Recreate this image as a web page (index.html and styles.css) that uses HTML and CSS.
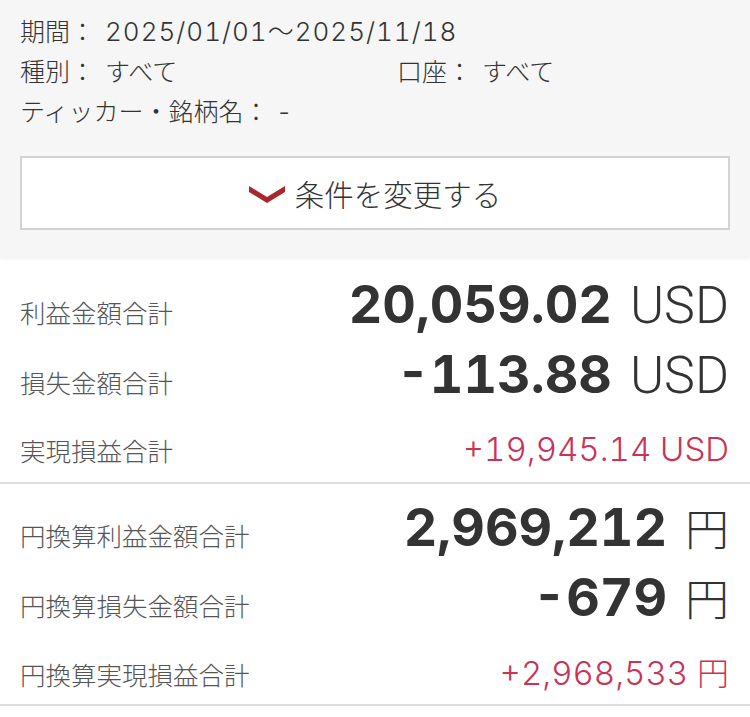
FILE: index.html
```html
<!DOCTYPE html>
<html lang="ja">
<head>
<meta charset="utf-8">
<link rel="stylesheet" href="styles.css">
</head>
<body>
<div class="filter">
  <div class="line"><span class="key">期間：</span><span class="val date">2025/01/01〜2025/11/18</span></div>
  <div class="line grid2">
    <div><span class="key">種別：</span><span class="val">すべて</span></div>
    <div><span class="key">口座：</span><span class="val">すべて</span></div>
  </div>
  <div class="line"><span class="key">ティッカー・銘柄名：</span><span class="val">-</span></div>
  <button class="change">
    <svg class="chev" width="36" height="17" viewBox="0 0 36 17"><path d="M0 0 L18 11 L36 0 L36 6 L18 17 L0 6 Z" fill="#a8272c"/></svg>
    <span>条件を変更する</span>
  </button>
</div>
<div class="section">
  <div class="row big"><span class="label">利益金額合計</span><span class="value"><span class="num">20,059.02</span><span class="unit">USD</span></span></div>
  <div class="row big"><span class="label">損失金額合計</span><span class="value"><span class="num">-113.88</span><span class="unit">USD</span></span></div>
  <div class="row small"><span class="label">実現損益合計</span><span class="value red">+19,945.14 USD</span></div>
</div>
<div class="section">
  <div class="row big"><span class="label">円換算利益金額合計</span><span class="value"><span class="num">2,969,212</span><span class="unit yen">円</span></span></div>
  <div class="row big"><span class="label">円換算損失金額合計</span><span class="value"><span class="num">-679</span><span class="unit yen">円</span></span></div>
  <div class="row small"><span class="label">円換算実現損益合計</span><span class="value red">+2,968,533 <span class="yen-s">円</span></span></div>
</div>
</body>
</html>
```
FILE: styles.css
```css
* { box-sizing: border-box; }
html, body { margin: 0; padding: 0; background: #fff; }
body {
  width: 750px;
  font-family: "Inter", "Noto Sans CJK JP", sans-serif;
  color: #333;
}
.filter {
  background: #f6f6f6;
  padding: 10px 20px 27px;
  box-shadow: 0 2px 3px rgba(0, 0, 0, 0.05);
  position: relative;
}
.line {
  font-size: 25px;
  line-height: 40px;
  height: 40px;
  font-weight: 300;
  white-space: nowrap;
}
.key { font-family: "Noto Sans CJK JP", sans-serif; font-weight: 300; }
.val { margin-left: 10px; }
.date {
  font-size: 26px;
  letter-spacing: 1px;
  font-feature-settings: "tnum" 1;
}
.grid2 { display: grid; grid-template-columns: 377px 1fr; }
.change {
  display: flex;
  align-items: center;
  justify-content: center;
  gap: 10px;
  width: 710px;
  height: 74px;
  margin-top: 26px;
  background: #fff;
  border: 2px solid #d3d3d3;
  padding: 0;
  font-family: "Noto Sans CJK JP", sans-serif;
  font-size: 29.5px;
  font-weight: 300;
  color: #333;
}
.chev { display: block; margin-top: 2px; }
.section {
  padding-top: 13px;
  border-bottom: 2px solid #dedede;
}
.section + .section { padding-top: 8px; }
.row {
  display: flex;
  justify-content: space-between;
  align-items: baseline;
  padding: 0 21px 0 20px;
}
.label {
  font-family: "Noto Sans CJK JP", sans-serif;
  font-size: 25.5px;
  font-weight: 300;
  color: #555;
}
.big { height: 70px; }
.big .value { line-height: 70px; white-space: nowrap; }
.num {
  font-family: "Inter", sans-serif;
  font-weight: 700;
  font-size: 52px;
  font-feature-settings: "tnum" 1;
  color: #333;
}
.unit {
  font-family: "Roboto", sans-serif;
  font-weight: 300;
  font-size: 52px;
  margin-left: 18px;
  color: #333;
}
.unit.yen {
  font-family: "Noto Sans CJK JP", sans-serif;
  font-weight: 300;
  font-size: 44px;
}
.small { height: 66px; margin-top: 6px; }
.small .value { line-height: 66px; }
.red {
  font-family: "Inter", sans-serif;
  font-weight: 300;
  font-size: 33px;
  font-feature-settings: "tnum" 1;
  color: #c93356;
  white-space: nowrap;
}
.yen-s { font-family: "Noto Sans CJK JP", sans-serif; font-weight: 300; font-size: 32px; }
```
